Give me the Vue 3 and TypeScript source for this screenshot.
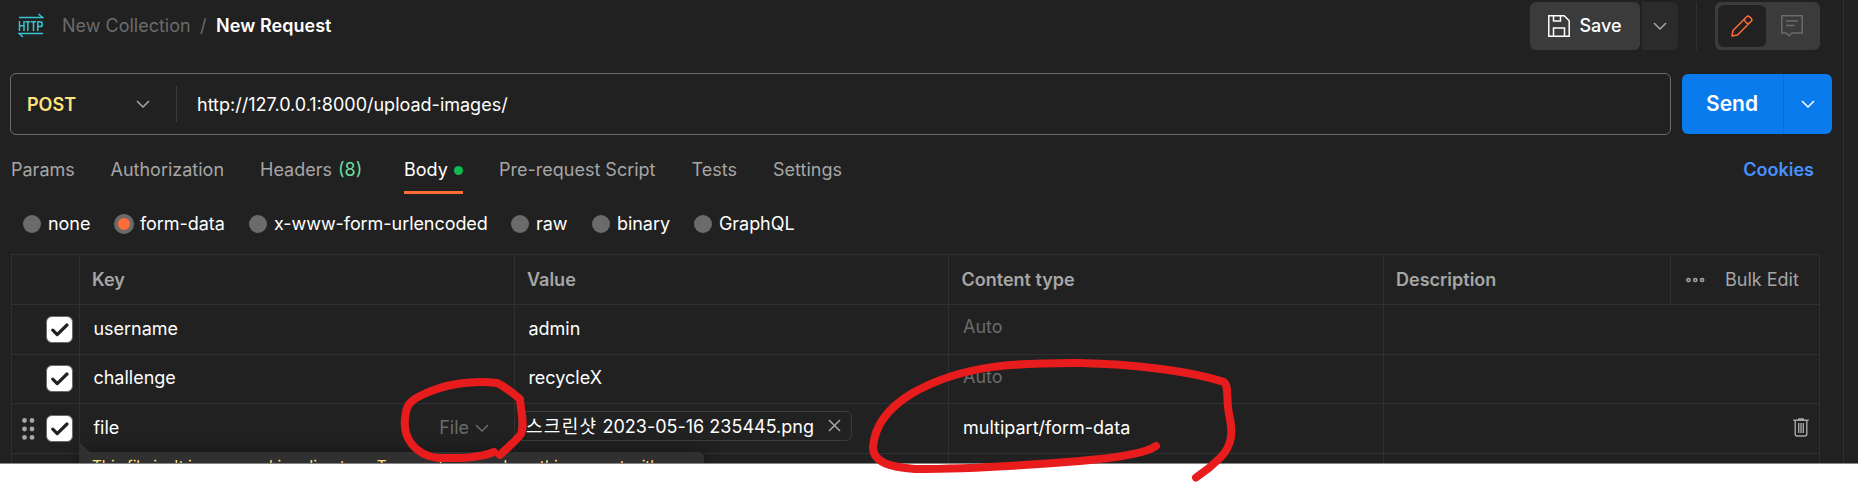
<script setup lang="ts">
interface Tab { label: string; count?: string; active?: boolean; width: number }
interface Mode { label: string; selected?: boolean; width: number }
interface Row { key: string; value: string; prefix?: string; type: string; file?: boolean }

const tabs: Tab[] = [
  { label: 'Params', width: 99.5 },
  { label: 'Authorization', width: 149.5 },
  { label: 'Headers', count: '(8)', width: 144 },
  { label: 'Body', active: true, width: 95 },
  { label: 'Pre-request Script', width: 192.5 },
  { label: 'Tests', width: 81.5 },
  { label: 'Settings', width: 100 },
]

const modes: Mode[] = [
  { label: 'none', width: 91 },
  { label: 'form-data', selected: true, width: 135 },
  { label: 'x-www-form-urlencoded', width: 262 },
  { label: 'raw', width: 81 },
  { label: 'binary', width: 102 },
  { label: 'GraphQL', width: 110 },
]

const rows: Row[] = [
  { key: 'username', value: 'admin', type: '' },
  { key: 'challenge', value: 'recycleX', type: '' },
  { key: 'file', prefix: '스크린샷', value: ' 2023-05-16 235445.png', type: 'multipart/form-data', file: true },
]
</script>

<template>
  <div class="page">
    <main class="panel">
      <header class="topbar">
        <svg class="http" width="26" height="26" viewBox="0 0 26 26" fill="none" stroke="#35c5d4" stroke-width="1.5">
          <path d="M1 4.5H24.5L20.5 1M25 20.5H1L5 24" />
          <path d="M1.5 8V18M6 8V18M1.5 12.8H6M7.3 8.7H12.3M9.8 8.7V18M13 8.7H18M15.5 8.7V18M19.8 18V8.7H22C25 8.7 25 13.6 22 13.6H19.8" />
        </svg>
        <span class="collection">New Collection</span>
        <span class="slash">/</span>
        <span class="request">New Request</span>
        <div class="save-group">
          <button class="save">
            <svg width="22" height="22" viewBox="0 0 22 22" fill="none" stroke="#fff" stroke-width="1.5">
              <path d="M.8.8H16.2L21.2 5.8V21.2H.8ZM5.5.8V6H12.5V.8M5.5 21.2V13H16.5V21.2" />
            </svg>
            <span>Save</span>
          </button>
          <button class="save-more">
            <svg width="14" height="8" viewBox="0 0 14 8" fill="none" stroke="#a6a6a6" stroke-width="1.5"><path d="M1 1L7 7L13 1" /></svg>
          </button>
        </div>
        <div class="top-divider"></div>
        <div class="switch">
          <div class="switch-on">
            <svg width="22" height="22" viewBox="0 0 22 22" fill="none" stroke="#ff6c37" stroke-width="1.5" stroke-linejoin="round">
              <path d="M1 21L2 15.5L15.7 1.8Q17 .5 18.6 1.8L20.2 3.4Q21.5 5 20.2 6.3L6.5 20ZM13.5 4C13.5 6.5 15.5 8.5 18 8.5" />
            </svg>
          </div>
          <div class="switch-off">
            <svg width="22" height="22" viewBox="0 0 22 22" fill="none" stroke="#6b6b6b" stroke-width="1.5">
              <path d="M.8.8H21.2V18H11L8 20.7L5 18H.8ZM5 6H17M5 10.5H13.5" />
            </svg>
          </div>
        </div>
      </header>

      <section class="url-row">
        <div class="url-box">
          <div class="method">
            <span>POST</span>
            <svg width="14" height="8" viewBox="0 0 14 8" fill="none" stroke="#a6a6a6" stroke-width="1.5"><path d="M1 1L7 7L13 1" /></svg>
          </div>
          <span class="url">http://127.0.0.1:8000/upload-images/</span>
        </div>
        <div class="send-group">
          <button class="send">Send</button>
          <button class="send-more">
            <svg width="14" height="8" viewBox="0 0 14 8" fill="none" stroke="#fff" stroke-width="1.5"><path d="M1 1L7 7L13 1" /></svg>
          </button>
        </div>
      </section>

      <nav class="tabs">
        <div v-for="t in tabs" :key="t.label" class="slot" :style="{ width: t.width + 'px' }">
          <div class="tab" :class="{ active: t.active }">
            <span>{{ t.label }}</span>
            <span v-if="t.count" class="count">{{ t.count }}</span>
            <i v-if="t.active" class="dot"></i>
          </div>
        </div>
        <a class="cookies">Cookies</a>
      </nav>

      <div class="modes">
        <label v-for="m in modes" :key="m.label" class="mode" :class="{ chosen: m.selected }" :style="{ width: m.width + 'px' }">
          <i class="radio" :class="{ selected: m.selected }"></i>
          <span>{{ m.label }}</span>
        </label>
      </div>

      <section class="table">
        <div class="row head">
          <div class="cell"></div>
          <div class="cell">Key</div>
          <div class="cell">Value</div>
          <div class="cell content-type">Content type</div>
          <div class="cell last">
            <span class="desc">Description</span>
            <div class="tools">
              <svg width="20" height="6" viewBox="0 0 20 6" fill="none" stroke="#a6a6a6" stroke-width="1.5"><circle cx="2.5" cy="3" r="1.6" /><circle cx="9.3" cy="3" r="1.6" /><circle cx="16.1" cy="3" r="1.6" /></svg>
              <span>Bulk Edit</span>
            </div>
          </div>
        </div>
        <div v-for="r in rows" :key="r.key" class="row item">
          <div class="cell control">
            <svg v-if="r.file" class="grip" width="13" height="22" viewBox="0 0 13 22" fill="#a6a6a6">
              <circle cx="2.5" cy="2.5" r="2.4" /><circle cx="10" cy="2.5" r="2.4" />
              <circle cx="2.5" cy="11" r="2.4" /><circle cx="10" cy="11" r="2.4" />
              <circle cx="2.5" cy="19.4" r="2.4" /><circle cx="10" cy="19.4" r="2.4" />
            </svg>
            <span class="check">
              <svg width="18" height="14" viewBox="0 0 18 14" fill="none" stroke="#212121" stroke-width="3.2" stroke-linecap="round" stroke-linejoin="round"><path d="M1.8 7.2L6.2 11.6L16 2" /></svg>
            </span>
          </div>
          <div class="cell">
            <span>{{ r.key }}</span>
            <span v-if="r.file" class="kind">
              File
              <svg width="14" height="8" viewBox="0 0 14 8" fill="none" stroke="#6b6b6b" stroke-width="1.5"><path d="M1 1L7 7L13 1" /></svg>
            </span>
          </div>
          <div class="cell" :class="{ 'chip-cell': r.file }">
            <span v-if="r.file" class="chip">
              <span class="filename"><span class="hangul">{{ r.prefix }}</span>{{ r.value }}</span>
              <svg width="13" height="13" viewBox="0 0 13 13" stroke="#a6a6a6" stroke-width="1.5"><path d="M1 1L12 12M12 1L1 12" /></svg>
            </span>
            <span v-else>{{ r.value }}</span>
          </div>
          <div class="cell type"><span :class="{ auto: !r.type }">{{ r.type || 'Auto' }}</span></div>
          <div class="cell last">
            <svg v-if="r.file" class="trash" width="16" height="19" viewBox="0 0 16 19" fill="none" stroke="#a6a6a6" stroke-width="1.4">
              <path d="M.3 2.2H15.7M5 1H11M2.2 3V16Q2.2 18 4 18H12Q13.8 18 13.8 16V3M5.7 5V15M8 5V15M10.3 5V15" />
            </svg>
          </div>
        </div>
        <div class="row tail"><div class="cell"></div><div class="cell"></div><div class="cell"></div><div class="cell"></div><div class="cell"></div></div>
      </section>
      <div class="tooltip">This file isn't in your working directory. Teammates you share this request with</div>
    </main>
    <svg class="marks" width="1858" height="482" viewBox="0 0 1858 482" fill="none" stroke="#e81c1c" stroke-linecap="round" stroke-linejoin="round">
      <path stroke-width="8" d="M494 452C477 459 454 458 438 458C414 455 403 437 405 419C406 405 410 401 420 396C445 383 475 380 497 383C506 387 514 394 520 399C521 413 525 425 521 434C516 441 507 448 500 455" />
      <path stroke-width="8" d="M1156 446C1145 454 1115 458 1080 461C1030 465 970 469 915 469C891 467 873 463 873 447C875 421 893 405 911 394C965 362 1027 363 1080 363C1132 364 1190 371 1224 382C1229 386 1226 398 1229 414C1233 431 1233 445 1220 458C1212 466 1206 471 1196 477.5" />
    </svg>
  </div>
</template>

<style>
body { margin: 0; background: #fff; }
</style>

<style scoped>
* { box-sizing: border-box; }
.page { position: relative; width: 1858px; height: 482px; overflow: hidden; font: 18px/24px Inter, "Noto Sans CJK KR", sans-serif; color: #fff; background: #fff; }
.panel { position: relative; display: flex; flex-direction: column; height: 464px; overflow: hidden; background: linear-gradient(#303030, #303030) 1843px 0 / 1px 100% no-repeat #212121; border-bottom: 1px solid #858585; }
svg { display: block; flex: none; }
button { border: 0; padding: 0; font: inherit; color: inherit; display: flex; align-items: center; justify-content: center; }
.topbar { display: flex; align-items: center; height: 52px; padding-left: 18px; flex: none; }
.collection { margin-left: 18px; color: #6b6b6b; width: 138px; }
.slash { color: #6b6b6b; width: 16px; }
.request { font-weight: 600; letter-spacing: 0.05px; }
.save-group { display: flex; gap: 2px; margin-left: auto; }
.save { width: 110px; height: 48px; gap: 9px; background: #3b3b3b; border-radius: 6px; }
.save span { font-weight: 500; }
.save-more { width: 36px; height: 48px; background: #2b2b2b; border-radius: 0 6px 6px 0; }
.top-divider { width: 1px; height: 48px; margin: 0 18px; background: #303030; }
.switch { display: flex; width: 105px; height: 48px; margin-right: 38px; padding: 3px; background: #3b3b3b; border-radius: 6px; }
.switch-on { display: grid; place-items: center; width: 48px; height: 42px; background: #212121; border-radius: 6px; }
.switch-off { display: grid; place-items: center; flex: 1; }
.url-row { display: flex; gap: 11px; align-items: center; height: 62px; margin: 21px 0 0 10px; flex: none; }
.url-box { display: flex; align-items: center; width: 1661px; height: 62px; border: 1px solid #6b6b6b; border-radius: 6px; }
.method { display: flex; align-items: center; justify-content: space-between; width: 166px; height: 36px; padding: 0 26px 0 16px; border-right: 1px solid #3b3b3b; color: #ffe47e; font-weight: 600; }
.method span { padding-top: 2px; }
.url { padding: 2px 0 0 20px; }
.send-group { display: flex; width: 150px; height: 60px; background: #097bed; border-radius: 6px; }
.send { width: 101px; padding-right: 1px; background: none; font-size: 21px; font-weight: 600; }
.send-more { flex: 1; background: none; border-left: 1px solid #0a6dd2; }
.tabs { display: flex; height: 60px; padding: 23px 0 0 11px; flex: none; color: #a6a6a6; white-space: nowrap; }
.slot { display: flex; align-items: flex-start; flex: none; }
.tab { display: flex; align-items: center; height: 36px; padding-bottom: 12px; }
.count { margin-left: 6px; color: #6bdd9a; }
.active { color: #fff; border-bottom: 3px solid #ff6c37; padding-bottom: 9px; }
.dot { width: 9px; height: 9px; margin-left: 6px; border-radius: 50%; background: #0cbb52; }
.cookies { margin-left: auto; margin-right: 44px; color: #4791ff; font-weight: 600; }
.modes { display: flex; height: 59px; padding: 17px 0 0 23px; flex: none; white-space: nowrap; }
.mode { display: flex; align-items: center; height: 24px; gap: 7px; letter-spacing: -0.06px; }
.chosen { gap: 6px; }
.radio { width: 18px; height: 18px; border-radius: 50%; background: #6b6b6b; flex: none; }
.radio.selected { width: 20px; height: 20px; background: #ff6c37; border: 4px solid #6b6b6b; }
.table { width: 1809px; margin-left: 11px; border: 1px solid #303030; border-bottom: 0; flex: none; }
.row { display: grid; grid-template-columns: 68px 435px 434px 435px 1fr; height: 50px; border-bottom: 1px solid #303030; }
.row:nth-child(3) { height: 49px; }
.cell { display: flex; align-items: center; border-right: 1px solid #303030; padding-left: 13px; min-width: 0; white-space: nowrap; }
.cell:last-child { border-right: 0; }
.head { color: #a6a6a6; font-weight: 600; }
.head .cell { padding-left: 12px; }
.head .content-type { padding-left: 12.5px; }
.tools { display: flex; align-items: center; gap: 19px; width: 149px; height: 100%; margin-left: auto; padding-left: 15px; border-left: 1px solid #303030; font-weight: 400; }
.item .cell { padding: 0 0 2px 13.4px; }
.item .type { padding-left: 14px; }
.item .control { justify-content: flex-end; padding: 0 6px 0 0; gap: 11px; }
.row:nth-child(3) .control { padding-bottom: 1px; }
.check { display: grid; place-items: center; width: 27px; height: 27px; border: 1px solid #6b6b6b; border-radius: 6px; background: #fff; }
.kind { display: flex; align-items: center; gap: 6px; margin-left: auto; margin-right: 25px; color: #6b6b6b; }
.item .chip-cell { padding: 0 0 6px 3px; }
.chip { display: flex; align-items: center; gap: 14px; height: 30px; padding: 0 10px 0 7px; border: 1px solid #3b3b3b; border-radius: 6px; }
.filename { white-space: pre; padding-top: 2px; }
.hangul { letter-spacing: 1.3px; }
.auto { color: #6b6b6b; padding-bottom: 3px; }
.trash { margin-left: auto; margin-right: 10px; }
.tooltip { position: absolute; left: 79px; top: 452px; width: 625px; height: 40px; padding: 3px 13px; background: #303030; border-radius: 0 6px 0 0; color: #ffe47e; font-size: 15.3px; white-space: nowrap; box-shadow: 0 0 14px rgba(0, 0, 0, .4); }
.tooltip::before { content: ""; position: absolute; left: 0; top: -10px; border-left: 11px solid #303030; border-top: 10px solid transparent; }
.marks { position: absolute; inset: 0; }
</style>
